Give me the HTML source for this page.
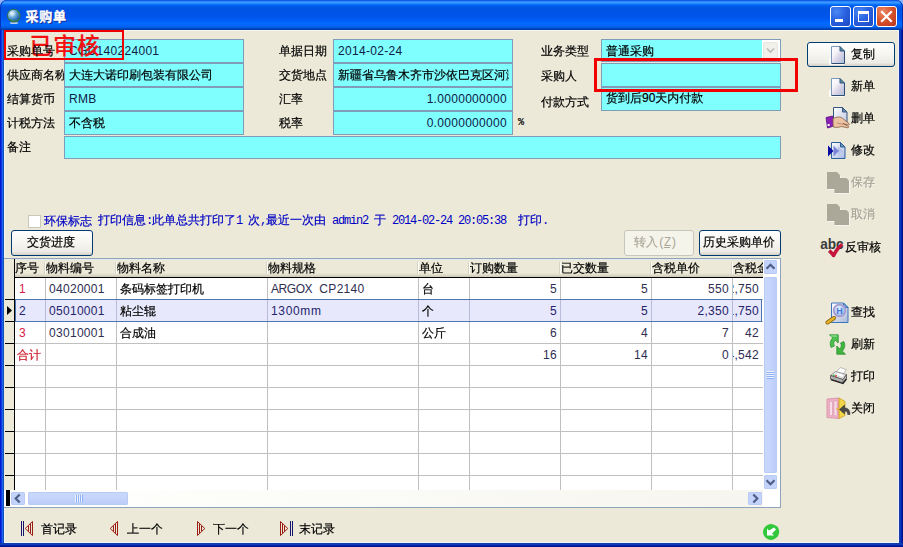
<!DOCTYPE html>
<html lang="zh-CN">
<head>
<meta charset="utf-8">
<title>采购单</title>
<style>
html,body{margin:0;padding:0}
body{width:903px;height:547px;overflow:hidden;position:relative;background:#ece9d8;
 font-family:"Liberation Sans","WenQuanYi Zen Hei",sans-serif;font-size:12px;line-height:12px;color:#000;-webkit-text-stroke:0.2px}
div,span{box-sizing:border-box}
.abs,.lbl,.fld,.btn,.sb,.tx{position:absolute}
/* window frame */
#title{position:absolute;left:0;top:0;width:903px;height:30px;
 background:linear-gradient(to bottom,#0046d6 0%,#1c74f6 3.500%,#3593ff 6%,#3a98ff 9%,#2088ff 12%,#0a72fa 15%,#0262ee 18%,#0057e5 24%,#0054e3 28%,#0055eb 56%,#005bf5 66%,#026afe 78%,#0064f2 88%,#0056dc 93%,#0044b8 96%,#0036a0 100%);
 border-radius:7px 7px 0 0;box-shadow:inset 1px 0 0 #0034c0,inset -1px 0 0 #0030b0}
#title .cap{-webkit-text-stroke:0.35px #fff;position:absolute;left:25.500px;top:9.500px;color:#fff;font-weight:bold;font-size:13px;line-height:14px;letter-spacing:.7px;
 font-family:"Liberation Sans","Noto Sans CJK SC",sans-serif;text-shadow:1px 1px 0 #0a1883}
#bl{left:0;top:30px;width:4px;height:517px;background:linear-gradient(to right,#0019d2 0px,#0019d2 1px,#0c3ce0 1px,#0c3ce0 2px,#1a64f0 2px,#1a64f0 3px,#1450b4 3px,#1450b4 4px)}
#br{left:899px;top:30px;width:4px;height:517px;background:linear-gradient(to right,#143ca8 0px,#143ca8 1px,#1038b8 1px,#1038b8 2px,#0020ae 2px,#0020ae 3px,#00148c 3px,#00148c 4px)}
#bb{left:0;top:543px;width:903px;height:4px;background:linear-gradient(to bottom,#143ca8 0px,#143ca8 1px,#1038b8 1px,#1038b8 2px,#0020ae 2px,#0020ae 3px,#00148c 3px,#00148c 4px)}
.lbl{white-space:nowrap;height:12px}
.fld{border:1px solid #7f9db9;background:#80ffff;height:24px;overflow:hidden;white-space:nowrap;
 color:#0c2048;padding:5px 4px 0 4px;line-height:13px;z-index:1;letter-spacing:.3px}
.fld{-webkit-text-stroke:0}
.fld.cn{letter-spacing:0;-webkit-text-stroke:0.2px}
.n{-webkit-text-stroke:0;letter-spacing:.3px}
.fld.cn{color:#000}
.fld.r{text-align:right;padding-right:5px;letter-spacing:.3px}
.btn{border:1px solid #003c74;border-radius:3px;height:25px;
 background:linear-gradient(to bottom,#ffffff 0%,#f6f5ef 50%,#ecebe5 86%,#d6d0c5 100%);
 text-align:center;line-height:23px;white-space:nowrap}
.btn.dis{border-color:#c9c7ba;background:#f5f4ea;color:#aca899}
.tx{white-space:nowrap}
.dis{color:#a7a394;text-shadow:1px 1px 0 rgba(255,255,255,.55)}
.sb{border-radius:2px;background:#c3d3fb;box-shadow:0 0 0 1px #b9cbf3 inset}
.sb.v{background:linear-gradient(to right,#cad9fd 0%,#c4d4fc 50%,#b9cbf7 100%)}
.sb.h{background:linear-gradient(to bottom,#cad9fd 0%,#c4d4fc 50%,#b9cbf7 100%)}
.tb{position:absolute;top:6px;width:21px;height:21px;border:1px solid #fff;border-radius:3px;
 background:radial-gradient(circle at 30% 25%,#4b8af5 0%,#2a62e0 45%,#1c48c0 100%)}
.tb.cl{background:radial-gradient(circle at 30% 25%,#ee8a68 0%,#d6502c 50%,#b8361a 100%)}
.a{font-family:"Liberation Mono",monospace;letter-spacing:-1.2px;-webkit-text-stroke:0}
</style>
</head>
<body>
<div id="corners" class="abs" style="left:0;top:0;width:903px;height:8px;background:#92b2fa"></div>
<div id="title"><span class="cap">采购单</span>
<svg class="abs" style="left:6px;top:7px" width="17" height="18" viewBox="0 0 17 18">
<defs><radialGradient id="gl" cx=".36" cy=".32" r=".8"><stop offset="0" stop-color="#f4fbff"/><stop offset=".2" stop-color="#b4d8ee"/><stop offset=".45" stop-color="#5a9ed2"/><stop offset=".75" stop-color="#2a68b0"/><stop offset="1" stop-color="#1c4a80"/></radialGradient></defs>
<ellipse cx="8" cy="16" rx="4.200" ry="1" fill="#c4d8f6" opacity=".95"/>
<circle cx="7.800" cy="8.700" r="6.400" fill="url(#gl)" stroke="#2f6a4e" stroke-width="1"/>
<path d="M1.800 10.500 c1.200 3 4 4.500 7.500 4.300 c2.500 -.3 4 -1.500 4.800 -3.300 c-1.500 1.300 -3.500 2.200 -6 2 c-2.500 -.2 -4.500 -1.200 -6.300 -3z" fill="#3f8a34" opacity=".9"/>
<path d="M9.500 2.500 c2.500 .8 4 2.800 4.500 5.500 c.2 1.200 0 2.200 -.3 3 c0 -3 -1.500 -6 -4.200 -8.500z" fill="#4a9440" opacity=".9"/>
<path d="M2 6 c.5 -2 2 -3.500 4 -4 c-1.500 1.200 -2.800 2.500 -4 4z" fill="#4a9440" opacity=".7"/>
</svg>
<div class="tb" style="left:830px"><div class="abs" style="left:4px;top:12px;width:8px;height:3px;background:#fff"></div></div>
<div class="tb" style="left:853px"><div class="abs" style="left:4px;top:4px;width:11px;height:11px;border:1px solid #fff;border-top:3px solid #fff"></div></div>
<div class="tb cl" style="left:876px"><svg width="19" height="19" style="position:absolute;left:0;top:0"><path d="M5 5 L14 14 M14 5 L5 14" stroke="#fff" stroke-width="2.200" stroke-linecap="square"/></svg></div>
</div>
<div id="bl" class="abs"></div><div id="br" class="abs"></div><div id="bb" class="abs"></div>

<div class="abs" style="left:4px;top:30px;width:1px;height:513px;background:#ecf4ff"></div><div class="abs" style="left:898px;top:30px;width:1px;height:513px;background:#e6f0ff"></div><div class="abs" style="left:4px;top:542px;width:895px;height:1px;background:#eef5ff"></div>
<div class="abs" style="left:4px;top:30px;width:895px;height:1px;background:#f8f7f0"></div>
<!-- FORM -->
<div id="form">
<div class="lbl" style="left:7px;top:45px;z-index:3">采购单号</div>
<div class="lbl" style="left:7px;top:69px">供应商名称</div>
<div class="lbl" style="left:7px;top:93px">结算货币</div>
<div class="lbl" style="left:7px;top:117px">计税方法</div>
<div class="lbl" style="left:7px;top:141px">备注</div>
<div class="fld" style="left:64px;top:39px;width:180px">CGD140224001</div>
<div class="fld cn" style="left:64px;top:63px;width:180px">大连大诺印刷包装有限公司</div>
<div class="fld" style="left:64px;top:87px;width:180px">RMB</div>
<div class="fld cn" style="left:64px;top:111px;width:180px">不含税</div>
<div class="fld" style="left:64px;top:136px;width:717px;height:23px"></div>

<div class="lbl" style="left:279px;top:45px">单据日期</div>
<div class="lbl" style="left:279px;top:69px">交货地点</div>
<div class="lbl" style="left:279px;top:93px">汇率</div>
<div class="lbl" style="left:279px;top:117px">税率</div>
<div class="fld" style="left:333px;top:39px;width:180px">2014-02-24</div>
<div class="fld cn" style="left:333px;top:63px;width:180px"><div style="width:171px;overflow:hidden">新疆省乌鲁木齐市沙依巴克区河滩北路</div></div>
<div class="fld r" style="left:333px;top:87px;width:180px">1.0000000000</div>
<div class="fld r" style="left:333px;top:111px;width:180px">0.0000000000</div>
<div class="lbl" style="left:518px;top:117px;font-family:'Liberation Mono','WenQuanYi Zen Hei Mono',monospace;font-size:10px">%</div>

<div class="lbl" style="left:541px;top:45px">业务类型</div>
<div class="lbl" style="left:541px;top:70px">采购人</div>
<div class="lbl" style="left:541px;top:96px">付款方式</div>
<div class="fld cn" style="left:601px;top:39px;width:180px;height:23px;padding:0;background:#fff">
 <div class="abs" style="left:0;top:0;width:160px;height:21px;background:#80ffff;padding:5px 0 0 4px;line-height:13px">普通采购</div>
 <div class="abs" style="left:161px;top:2px;width:15px;height:17px;background:#f1f0e9;border:1px solid #e6e5de;border-radius:2px">
 <svg width="13" height="15" style="position:absolute;left:0;top:0"><path d="M3 5.500 L6.500 9 L10 5.500" fill="none" stroke="#bdbcb6" stroke-width="1.700"/></svg></div>
</div>
<div class="fld" style="left:601px;top:63px;width:180px"></div>
<div class="fld cn" style="left:601px;top:87px;width:180px;padding-top:4px">货到后90天内付款</div>

<div class="abs" style="left:594px;top:58px;width:204px;height:34px;border:3px solid #f00000;z-index:2"></div>
<div class="abs" style="left:4px;top:30px;width:120px;height:30px;border:2px solid #f00000;z-index:2"></div>
<div class="abs" style="left:29.500px;top:34px;z-index:2;-webkit-text-stroke:0.2px;font-size:22.500px;line-height:26px;color:#f41010;font-family:'Liberation Sans','Noto Sans CJK SC',sans-serif;font-weight:500;white-space:nowrap;letter-spacing:1.300px">已审核</div>
</div>
<!-- SIDE -->
<div id="side">
<div class="btn" style="left:807px;top:42px;width:88px;height:25px"></div>
<svg class="abs" style="left:829px;top:45px" width="18" height="21" viewBox="0 0 18 21">
<defs><linearGradient id="g1" x1="0" y1="0" x2="1" y2="1"><stop offset="0" stop-color="#ffffff"/><stop offset=".35" stop-color="#f4f2f8"/><stop offset=".6" stop-color="#d9d3e6"/><stop offset="1" stop-color="#a9bcd8"/></linearGradient></defs>
<path d="M0 13 h2.500 v5.500 h12.500 v1.500 h-15z" fill="#fff" opacity=".85"/>
<path d="M2.500 1.500 h8.500 l4.500 4.500 v12.500 h-13z" fill="url(#g1)"/>
<path d="M2.500 18.500 v-17 h8.500" fill="none" stroke="#7b9abb" stroke-width="1"/>
<path d="M2.500 18.500 h13 v-12.500" fill="none" stroke="#2c4c74" stroke-width="1"/>
<path d="M11 1.500 v4.500 h4.500z" fill="#5a88a4" stroke="#2c5a78" stroke-width="1" stroke-linejoin="round"/>
</svg>
<div class="tx" style="left:851px;top:48px">复制</div>
<svg class="abs" style="left:829px;top:77px" width="18" height="21" viewBox="0 0 18 21">
<defs><linearGradient id="g2" x1="0" y1="0" x2="1" y2="1"><stop offset="0" stop-color="#ffffff"/><stop offset=".35" stop-color="#f4f2f8"/><stop offset=".6" stop-color="#d9d3e6"/><stop offset="1" stop-color="#a9bcd8"/></linearGradient></defs>
<path d="M0 13 h2.500 v5.500 h12.500 v1.500 h-15z" fill="#fff" opacity=".85"/>
<path d="M2.500 1.500 h8.500 l4.500 4.500 v12.500 h-13z" fill="url(#g2)"/>
<path d="M2.500 18.500 v-17 h8.500" fill="none" stroke="#7b9abb" stroke-width="1"/>
<path d="M2.500 18.500 h13 v-12.500" fill="none" stroke="#2c4c74" stroke-width="1"/>
<path d="M11 1.500 v4.500 h4.500z" fill="#5a88a4" stroke="#2c5a78" stroke-width="1" stroke-linejoin="round"/>
</svg>
<div class="tx" style="left:851px;top:80px">新单</div>

<svg class="abs" style="left:825px;top:106px" width="26" height="24" viewBox="0 0 26 24">
<defs><linearGradient id="g3" x1="0" y1="0" x2="1" y2="1"><stop offset="0" stop-color="#fff"/><stop offset="1" stop-color="#bcc6e2"/></linearGradient></defs>
<path d="M8.5 1.5 h9 l4.500 4.500 v12 h-13.500z" fill="url(#g3)" stroke="#35557e"/>
<path d="M17.500 1.500 v4.500 h4.500z" fill="#6a8db0" stroke="#35557e" stroke-linejoin="round"/>
<path d="M1 11.500 l6.500 -1.500 l1.500 10 l-6.500 2z" fill="#8a1fb4" stroke="#5a0f80" stroke-width=".8"/>
<rect x="2.600" y="18" width="2" height="2" fill="#fff"/>
<path d="M8 12.500 c3 -1.500 6 -2 8.500 -1 l7.500 6 c.8 .8 .3 1.800 -1 1.500 l-5 -1.500 l5.500 3 c.5 .8 -.3 1.500 -1.300 1.200 l-6 -1.200 c-3 1.200 -5.500 1 -8 .5z" fill="#ecc3a2" stroke="#8b5e45" stroke-width=".8" stroke-linejoin="round"/>
<path d="M12 17 l6 1.300" stroke="#a87660" stroke-width=".7" fill="none"/>
</svg>
<div class="tx" style="left:851px;top:112px">删单</div>

<svg class="abs" style="left:826px;top:140px" width="22" height="21" viewBox="0 0 22 21">
<defs><linearGradient id="g4" x1="0" y1="0" x2="1" y2="1"><stop offset="0" stop-color="#fff"/><stop offset="1" stop-color="#a9b9e4"/></linearGradient></defs>
<path d="M5.500 2.500 h9 l4.500 4.500 v11.500 h-13.500z" fill="url(#g4)" stroke="#2f5f9a"/>
<path d="M14.500 2.500 v4.500 h4.500z" fill="#6a8db0" stroke="#2f5f9a" stroke-linejoin="round"/>
<path d="M12 6 l5 5 l-5 5z" fill="#b8c2ea"/>
<path d="M7.500 5.500 l5.500 5.500 l-5.500 5.500z" fill="#7b86d6"/>
<path d="M2 5.500 l5.500 5.500 l-5.500 5.500z" fill="#0a0aa0"/>
</svg>
<div class="tx" style="left:851px;top:144px">修改</div>

<svg class="abs" style="left:826px;top:171px" width="25" height="24" viewBox="0 0 25 24">
<path d="M1 1 h10 l3 3 v14 h-13z M8.500 7 h12 l2.500 2.500 v12.500 h-14.500z" fill="#fff" opacity=".75" transform="translate(.8,.8)"/>
<path d="M1 1 h10 l3 3 v14 h-13z" fill="#aca899"/>
<path d="M8.500 7 h12 l2.500 2.500 v12.500 h-14.500z" fill="#aca899"/>
</svg>
<div class="tx dis" style="left:851px;top:176px">保存</div>
<svg class="abs" style="left:826px;top:203px" width="25" height="24" viewBox="0 0 25 24">
<path d="M1 1 h10 l3 3 v14 h-13z M8.500 7 h12 l2.500 2.500 v12.500 h-14.500z" fill="#fff" opacity=".75" transform="translate(.8,.8)"/>
<path d="M1 1 h10 l3 3 v14 h-13z" fill="#aca899"/>
<path d="M8.500 7 h12 l2.500 2.500 v12.500 h-14.500z" fill="#aca899"/>
</svg>
<div class="tx dis" style="left:851px;top:208px">取消</div>

<svg class="abs" style="left:819px;top:236px" width="28" height="24" viewBox="0 0 28 24">
<text x="1.200" y="13" font-family="Liberation Sans, sans-serif" font-weight="bold" font-size="14" fill="#3a3a3a" textLength="23.500" lengthAdjust="spacingAndGlyphs">abc</text>
<path d="M9.200 16 L11.400 13.600 L14.400 16.600 C16.500 12.500 19 9.800 22 7.600 L24.200 9.200 C20.500 12.500 17.800 16.500 15.600 20.900 L13.600 20.900 C12.500 19 11 17.500 9.200 16z" fill="#c8143c" stroke="#a01030" stroke-width=".4"/>
</svg>
<div class="tx" style="left:845px;top:241px">反审核</div>

<svg class="abs" style="left:825px;top:301px" width="25" height="24" viewBox="0 0 25 24">
<defs><linearGradient id="g5" x1="0" y1="0" x2="1" y2="1"><stop offset="0" stop-color="#fff"/><stop offset="1" stop-color="#aab8d8"/></linearGradient>
<radialGradient id="g6" cx=".4" cy=".35" r=".7"><stop offset="0" stop-color="#e8f2ff"/><stop offset="1" stop-color="#8db4ee"/></radialGradient></defs>
<path d="M6.500 2 h12 l4.500 4.500 v15 h-16.500z" fill="url(#g5)" stroke="#3c74c0"/>
<path d="M18.500 2 v4.500 h4.500z" fill="#7ba0d8" stroke="#3c74c0" stroke-linejoin="round"/>
<path d="M9 17 l-6.500 4.500" stroke="#8a6410" stroke-width="4" stroke-linecap="round"/>
<path d="M9 17 l-6.500 4.500" stroke="#e6b428" stroke-width="2.400" stroke-linecap="round"/>
<circle cx="14.500" cy="9.500" r="5.800" fill="url(#g6)" stroke="#a79ccc" stroke-width="1.800"/>
<text x="11.300" y="13" font-family="Liberation Sans, sans-serif" font-weight="bold" font-size="9" fill="#4a78d8">H</text>
</svg>
<div class="tx" style="left:851px;top:306px">查找</div>

<svg class="abs" style="left:827px;top:333px" width="21" height="23" viewBox="0 0 21 23">
<path d="M2.500 1.800 h8.700 v8.200 l-2.800 -2.800 c-1.800 1.500 -2.200 3.500 -1 5.800 l-3.200 1.500 c-1.800 -3.500 -1 -7 1.500 -9.500z" fill="#4cc04c" stroke="#2f8f36" stroke-width=".8" stroke-linejoin="round"/>
<path d="M18.500 21.200 h-8.700 v-8.200 l2.800 2.800 c1.800 -1.500 2.200 -3.500 1 -5.800 l3.200 -1.500 c1.800 3.500 1 7 -1.500 9.500z" fill="#3fb43f" stroke="#2f8f36" stroke-width=".8" stroke-linejoin="round"/>
<path d="M4 3 h6" stroke="#a8eaa0" stroke-width="1"/>
</svg>
<div class="tx" style="left:851px;top:338px">刷新</div>

<svg class="abs" style="left:829px;top:366px" width="19" height="19" viewBox="0 0 19 19">
<path d="M6.500 6.500 l4.800 -5 l6 2.200 l-4.300 5.800z" fill="#fff" stroke="#a4a4a4" stroke-width=".7"/>
<path d="M1.500 9.500 l5 -4 l11 3 l-3.500 5 z" fill="#ececec" stroke="#7c7c7c" stroke-width=".8" stroke-linejoin="round"/>
<path d="M8 6.500 l7.500 2.200 l-2 2.800 l-7.500 -2.400z" fill="#fff" stroke="#b0b0b0" stroke-width=".5"/>
<path d="M1.500 9.500 l12.500 4 l3.500 -5 v4 l-3.500 4.500 l-12.500 -4z" fill="#b2b2b2" stroke="#4c4c4c" stroke-width=".8" stroke-linejoin="round"/>
<path d="M14 13.500 v4" stroke="#5c5c5c" stroke-width=".8"/>
<path d="M1.800 13.600 l12.200 3.900 l3.500 -4.500" stroke="#222" stroke-width="1.300" fill="none"/>
<circle cx="4.800" cy="9.300" r=".9" fill="#30b030"/><circle cx="7" cy="10" r=".9" fill="#e03030"/>
</svg>
<div class="tx" style="left:851px;top:370px">打印</div>

<svg class="abs" style="left:826px;top:397px" width="25" height="23" viewBox="0 0 25 23">
<path d="M1 2 l12 -1 v20.500 l-12 -1z" fill="#eeb0c4" stroke="#d68aa4" stroke-width=".8"/>
<path d="M3.500 4.500 l3 -.3 v14.500 l-3 -.3z M8 4 l3 -.3 v15.300 l-3 -.300z" fill="#f8dce6" stroke="#d896ae" stroke-width=".6"/>
<path d="M13 1 l6 3.500 v14 l-6 3z" fill="#f2d64a" stroke="#c8a020" stroke-width=".8"/>
<circle cx="11.500" cy="12" r="1" fill="#e8b020"/>
<path d="M13.500 12.500 l5 -4.500 v3 c3.500 0 5.500 2 5.500 6.500 h-2.300 c0 -2.500 -1 -3.500 -3.200 -3.500 v3z" fill="#4a4a4a" stroke="#2a2a2a" stroke-width=".5" stroke-linejoin="round"/>
</svg>
<div class="tx" style="left:851px;top:402px">关闭</div>
</div>
<!-- MID -->
<div id="mid">
<div class="abs" style="left:28px;top:215px;width:13px;height:13px;background:#fff;border:1px solid #cac8bb"></div>
<div class="tx" style="left:44px;top:215px;color:#0000c4">环保标志</div>
<div class="tx" style="left:98px;top:215px;color:#0000c4;font-family:'Liberation Mono','WenQuanYi Zen Hei',monospace;white-space:pre;letter-spacing:0">打印信息<span class="a">:</span>此单总共打印了<span class="a">1 </span>次<span class="a">,</span>最近一次由<span class="a"> admin2 </span>于<span class="a"> 2014-02-24 20:05:38  </span>打印<span class="a">.</span></div>
<div class="btn" style="left:11px;top:230px;width:82px;height:26px;line-height:22px;text-align:left;padding-left:15px">交货进度</div>
<div class="btn dis" style="left:624px;top:230px;width:70px;height:26px;line-height:22px;text-align:left;padding-left:9px;text-shadow:none">转入<span class="a" style="font-size:12px">(<u>Z</u>)</span></div>
<div class="btn" style="left:699px;top:230px;width:82px;height:26px;line-height:22px;text-align:left;padding-left:3px">历史采购单价</div>
</div>
<!-- GRID -->
<div id="grid" class="abs" style="left:4px;top:258px;width:777px;height:250px;border:1px solid #8da4bc;border-left:none;background:#fff;overflow:hidden">
<div class="abs" style="left:0;top:0;width:759px;height:18px;background:linear-gradient(to bottom,#e4e9ee 0,#e4e9ee 1px,#ece9d8 1px,#ece9d8 14px,#dedbc9 16px,#c8c5b2 18px)"></div>
<div class="abs" style="left:0;top:0;width:10px;height:231px;background:#ece9d8"></div>
<div class="tx" style="left:11px;top:3px;width:30px;overflow:hidden">序号</div>
<div class="abs" style="left:40px;top:3px;width:1px;height:12px;background:#d8d4c4"></div>
<div class="abs" style="left:41px;top:3px;width:1px;height:12px;background:#fff"></div>
<div class="tx" style="left:42px;top:3px;width:70px;overflow:hidden">物料编号</div>
<div class="abs" style="left:111px;top:3px;width:1px;height:12px;background:#d8d4c4"></div>
<div class="abs" style="left:112px;top:3px;width:1px;height:12px;background:#fff"></div>
<div class="tx" style="left:113px;top:3px;width:150px;overflow:hidden">物料名称</div>
<div class="abs" style="left:262px;top:3px;width:1px;height:12px;background:#d8d4c4"></div>
<div class="abs" style="left:263px;top:3px;width:1px;height:12px;background:#fff"></div>
<div class="tx" style="left:264px;top:3px;width:150px;overflow:hidden">物料规格</div>
<div class="abs" style="left:413px;top:3px;width:1px;height:12px;background:#d8d4c4"></div>
<div class="abs" style="left:414px;top:3px;width:1px;height:12px;background:#fff"></div>
<div class="tx" style="left:415px;top:3px;width:50px;overflow:hidden">单位</div>
<div class="abs" style="left:464px;top:3px;width:1px;height:12px;background:#d8d4c4"></div>
<div class="abs" style="left:465px;top:3px;width:1px;height:12px;background:#fff"></div>
<div class="tx" style="left:466px;top:3px;width:90px;overflow:hidden">订购数量</div>
<div class="abs" style="left:555px;top:3px;width:1px;height:12px;background:#d8d4c4"></div>
<div class="abs" style="left:556px;top:3px;width:1px;height:12px;background:#fff"></div>
<div class="tx" style="left:557px;top:3px;width:90px;overflow:hidden">已交数量</div>
<div class="abs" style="left:646px;top:3px;width:1px;height:12px;background:#d8d4c4"></div>
<div class="abs" style="left:647px;top:3px;width:1px;height:12px;background:#fff"></div>
<div class="tx" style="left:648px;top:3px;width:80px;overflow:hidden">含税单价</div>
<div class="abs" style="left:727px;top:3px;width:1px;height:12px;background:#d8d4c4"></div>
<div class="abs" style="left:728px;top:3px;width:1px;height:12px;background:#fff"></div>
<div class="tx" style="left:729px;top:3px;width:30px;overflow:hidden">含税金额</div>
<div class="abs" style="left:41px;top:19px;width:1px;height:212px;background:#c0c0c0"></div>
<div class="abs" style="left:112px;top:19px;width:1px;height:212px;background:#c0c0c0"></div>
<div class="abs" style="left:263px;top:19px;width:1px;height:212px;background:#c0c0c0"></div>
<div class="abs" style="left:414px;top:19px;width:1px;height:212px;background:#c0c0c0"></div>
<div class="abs" style="left:465px;top:19px;width:1px;height:212px;background:#c0c0c0"></div>
<div class="abs" style="left:556px;top:19px;width:1px;height:212px;background:#c0c0c0"></div>
<div class="abs" style="left:647px;top:19px;width:1px;height:212px;background:#c0c0c0"></div>
<div class="abs" style="left:728px;top:19px;width:1px;height:212px;background:#c0c0c0"></div>
<div class="abs" style="left:11px;top:40px;width:748px;height:1px;background:#c0c0c0"></div>
<div class="abs" style="left:1px;top:40px;width:9px;height:1px;background:#000"></div>
<div class="abs" style="left:11px;top:62px;width:748px;height:1px;background:#c0c0c0"></div>
<div class="abs" style="left:1px;top:62px;width:9px;height:1px;background:#000"></div>
<div class="abs" style="left:11px;top:84px;width:748px;height:1px;background:#c0c0c0"></div>
<div class="abs" style="left:1px;top:84px;width:9px;height:1px;background:#000"></div>
<div class="abs" style="left:11px;top:106px;width:748px;height:1px;background:#c0c0c0"></div>
<div class="abs" style="left:1px;top:106px;width:9px;height:1px;background:#000"></div>
<div class="abs" style="left:11px;top:128px;width:748px;height:1px;background:#c0c0c0"></div>
<div class="abs" style="left:1px;top:128px;width:9px;height:1px;background:#000"></div>
<div class="abs" style="left:11px;top:150px;width:748px;height:1px;background:#c0c0c0"></div>
<div class="abs" style="left:1px;top:150px;width:9px;height:1px;background:#000"></div>
<div class="abs" style="left:11px;top:172px;width:748px;height:1px;background:#c0c0c0"></div>
<div class="abs" style="left:1px;top:172px;width:9px;height:1px;background:#000"></div>
<div class="abs" style="left:11px;top:194px;width:748px;height:1px;background:#c0c0c0"></div>
<div class="abs" style="left:1px;top:194px;width:9px;height:1px;background:#000"></div>
<div class="abs" style="left:11px;top:216px;width:748px;height:1px;background:#c0c0c0"></div>
<div class="abs" style="left:1px;top:216px;width:9px;height:1px;background:#000"></div>
<div class="abs" style="left:11px;top:40px;width:747px;height:23px;background:#e8e8fc;border:1px solid #4c74b0"></div>
<div class="abs" style="left:41px;top:41px;width:1px;height:21px;background:#b8bcd8"></div>
<div class="abs" style="left:112px;top:41px;width:1px;height:21px;background:#b8bcd8"></div>
<div class="abs" style="left:263px;top:41px;width:1px;height:21px;background:#b8bcd8"></div>
<div class="abs" style="left:414px;top:41px;width:1px;height:21px;background:#b8bcd8"></div>
<div class="abs" style="left:465px;top:41px;width:1px;height:21px;background:#b8bcd8"></div>
<div class="abs" style="left:556px;top:41px;width:1px;height:21px;background:#b8bcd8"></div>
<div class="abs" style="left:647px;top:41px;width:1px;height:21px;background:#b8bcd8"></div>
<div class="abs" style="left:728px;top:41px;width:1px;height:21px;background:#b8bcd8"></div>
<div class="abs" style="left:10px;top:0;width:1px;height:231px;background:#000"></div>
<div class="abs" style="left:10px;top:18px;width:749px;height:1px;background:#000"></div>
<svg class="abs" style="left:3px;top:47px" width="6" height="10"><path d="M0 0 L5 4.500 L0 9z" fill="#000"/></svg>
<div class="tx n" style="left:15px;top:24px;color:#d81846;height:14px;line-height:13px">1</div>
<div class="tx n" style="left:45px;top:24px;color:#2e2e52;height:14px;line-height:13px">04020001</div>
<div class="tx" style="left:116px;top:24px;color:#000;height:14px;line-height:13px">条码标签打印机</div>
<div class="tx n" style="left:267px;top:24px;color:#2e2e52;height:14px;line-height:13px;white-space:pre"><span style="letter-spacing:-.45px">ARGOX</span>  CP2140</div>
<div class="tx" style="left:418px;top:24px;color:#000;height:14px;line-height:13px">台</div>
<div class="tx n" style="left:466px;top:24px;width:87px;text-align:right;color:#2e2e52;overflow:hidden;direction:rtl;height:14px;line-height:13px;letter-spacing:.3px"><span style="direction:ltr;unicode-bidi:bidi-override">5</span></div>
<div class="tx n" style="left:557px;top:24px;width:87px;text-align:right;color:#2e2e52;overflow:hidden;direction:rtl;height:14px;line-height:13px;letter-spacing:.3px"><span style="direction:ltr;unicode-bidi:bidi-override">5</span></div>
<div class="tx n" style="left:648px;top:24px;width:77px;text-align:right;color:#2e2e52;overflow:hidden;direction:rtl;height:14px;line-height:13px;letter-spacing:.3px"><span style="direction:ltr;unicode-bidi:bidi-override">550</span></div>
<div class="tx n" style="left:729px;top:24px;width:26px;text-align:right;color:#2e2e52;overflow:hidden;direction:rtl;height:14px;line-height:13px;letter-spacing:.3px"><span style="direction:ltr;unicode-bidi:bidi-override">2,750</span></div>
<div class="tx n" style="left:15px;top:46px;color:#24246a;height:14px;line-height:13px">2</div>
<div class="tx n" style="left:45px;top:46px;color:#24246a;height:14px;line-height:13px">05010001</div>
<div class="tx" style="left:116px;top:46px;color:#000;height:14px;line-height:13px">粘尘辊</div>
<div class="tx n" style="left:267px;top:46px;color:#24246a;height:14px;line-height:13px;letter-spacing:.65px">1300mm</div>
<div class="tx" style="left:418px;top:46px;color:#000;height:14px;line-height:13px">个</div>
<div class="tx n" style="left:466px;top:46px;width:87px;text-align:right;color:#24246a;overflow:hidden;direction:rtl;height:14px;line-height:13px;letter-spacing:.3px"><span style="direction:ltr;unicode-bidi:bidi-override">5</span></div>
<div class="tx n" style="left:557px;top:46px;width:87px;text-align:right;color:#24246a;overflow:hidden;direction:rtl;height:14px;line-height:13px;letter-spacing:.3px"><span style="direction:ltr;unicode-bidi:bidi-override">5</span></div>
<div class="tx n" style="left:648px;top:46px;width:77px;text-align:right;color:#24246a;overflow:hidden;direction:rtl;height:14px;line-height:13px;letter-spacing:.3px"><span style="direction:ltr;unicode-bidi:bidi-override">2,350</span></div>
<div class="tx n" style="left:729px;top:46px;width:26px;text-align:right;color:#24246a;overflow:hidden;direction:rtl;height:14px;line-height:13px;letter-spacing:.3px"><span style="direction:ltr;unicode-bidi:bidi-override">11,750</span></div>
<div class="tx n" style="left:15px;top:68px;color:#d81846;height:14px;line-height:13px">3</div>
<div class="tx n" style="left:45px;top:68px;color:#2e2e52;height:14px;line-height:13px">03010001</div>
<div class="tx" style="left:116px;top:68px;color:#000;height:14px;line-height:13px">合成油</div>
<div class="tx" style="left:418px;top:68px;color:#000;height:14px;line-height:13px">公斤</div>
<div class="tx n" style="left:466px;top:68px;width:87px;text-align:right;color:#2e2e52;overflow:hidden;direction:rtl;height:14px;line-height:13px;letter-spacing:.3px"><span style="direction:ltr;unicode-bidi:bidi-override">6</span></div>
<div class="tx n" style="left:557px;top:68px;width:87px;text-align:right;color:#2e2e52;overflow:hidden;direction:rtl;height:14px;line-height:13px;letter-spacing:.3px"><span style="direction:ltr;unicode-bidi:bidi-override">4</span></div>
<div class="tx n" style="left:648px;top:68px;width:77px;text-align:right;color:#2e2e52;overflow:hidden;direction:rtl;height:14px;line-height:13px;letter-spacing:.3px"><span style="direction:ltr;unicode-bidi:bidi-override">7</span></div>
<div class="tx n" style="left:729px;top:68px;width:26px;text-align:right;color:#2e2e52;overflow:hidden;direction:rtl;height:14px;line-height:13px;letter-spacing:.3px"><span style="direction:ltr;unicode-bidi:bidi-override">42</span></div>
<div class="tx" style="left:13px;top:90px;color:#cc1a2a;height:14px;line-height:13px">合计</div>
<div class="tx n" style="left:466px;top:90px;width:87px;text-align:right;color:#2e2e52;overflow:hidden;direction:rtl;height:14px;line-height:13px;letter-spacing:.3px"><span style="direction:ltr;unicode-bidi:bidi-override">16</span></div>
<div class="tx n" style="left:557px;top:90px;width:87px;text-align:right;color:#2e2e52;overflow:hidden;direction:rtl;height:14px;line-height:13px;letter-spacing:.3px"><span style="direction:ltr;unicode-bidi:bidi-override">14</span></div>
<div class="tx n" style="left:648px;top:90px;width:77px;text-align:right;color:#2e2e52;overflow:hidden;direction:rtl;height:14px;line-height:13px;letter-spacing:.3px"><span style="direction:ltr;unicode-bidi:bidi-override">0</span></div>
<div class="tx n" style="left:729px;top:90px;width:26px;text-align:right;color:#2e2e52;overflow:hidden;direction:rtl;height:14px;line-height:13px;letter-spacing:.3px"><span style="direction:ltr;unicode-bidi:bidi-override">14,542</span></div>
<div class="abs" style="left:759px;top:0;width:17px;height:232px;background:#fefefc"></div>
<div class="sb" style="left:760px;top:1px;width:13px;height:14px"><svg width="13" height="14" style="position:absolute;left:0;top:0"><path d="M2.500 8.700 L6.500 4.700 L10.500 8.700" fill="none" stroke="#4d6185" stroke-width="2.200"/></svg></div>
<div class="sb v" style="left:760px;top:18px;width:13px;height:196px"><div class="abs" style="left:3px;top:94px;width:7px;height:8px;background:repeating-linear-gradient(to bottom,#eef4fe 0,#eef4fe 1px,#8cb0f8 1px,#8cb0f8 2px)"></div></div>
<div class="sb" style="left:760px;top:216px;width:13px;height:14px"><svg width="13" height="14" style="position:absolute;left:0;top:0"><path d="M2.500 5.300 L6.500 9.300 L10.500 5.300" fill="none" stroke="#4d6185" stroke-width="2.200"/></svg></div>
<div class="abs" style="left:0;top:231px;width:776px;height:17px;background:linear-gradient(to right,#ffffff 0%,#fdfdfa 25%,#f6f5ef 100%)"></div>
<div class="abs" style="left:759px;top:231px;width:17px;height:17px;background:#fff"></div>
<div class="abs" style="left:2px;top:231px;width:4px;height:16px;background:#000"></div>
<div class="sb" style="left:7px;top:233px;width:14px;height:13px"><svg width="14" height="13" style="position:absolute;left:0;top:0"><path d="M8.700 2.500 L4.700 6.500 L8.700 10.500" fill="none" stroke="#4d6185" stroke-width="2.200"/></svg></div>
<div class="sb h" style="left:24px;top:233px;width:100px;height:13px"><div class="abs" style="left:47px;top:3px;width:8px;height:7px;background:repeating-linear-gradient(to right,#eef4fe 0,#eef4fe 1px,#8cb0f8 1px,#8cb0f8 2px)"></div></div>
<div class="sb" style="left:744px;top:233px;width:14px;height:13px"><svg width="14" height="13" style="position:absolute;left:0;top:0"><path d="M5.300 2.500 L9.300 6.500 L5.300 10.500" fill="none" stroke="#4d6185" stroke-width="2.200"/></svg></div>
</div>
<!-- NAV -->
<div id="nav">
<svg class="abs" style="left:20px;top:520px" width="15" height="17" viewBox="0 0 15 17">
<path d="M1.500 1 v15 M3.500 1 v15" stroke="#141470" stroke-width="1"/>
<path d="M12.5 1.500 V15.500 L5.2 8.500 Z" fill="none" stroke="#9a1c10" stroke-width="1" stroke-linejoin="miter"/><path d="M10.5 4 V13 M8.5 6 V11" stroke="#9a1c10" stroke-width="1"/>
</svg>
<div class="tx" style="left:41px;top:523px">首记录</div>
<svg class="abs" style="left:108px;top:520px" width="11" height="17" viewBox="0 0 11 17">
<path d="M9.5 1.500 V15.500 L2.2 8.500 Z" fill="none" stroke="#9a1c10" stroke-width="1" stroke-linejoin="miter"/><path d="M7.5 4 V13 M5.5 6 V11" stroke="#9a1c10" stroke-width="1"/>
</svg>
<div class="tx" style="left:127px;top:523px">上一个</div>
<svg class="abs" style="left:196px;top:520px" width="11" height="17" viewBox="0 0 11 17">
<path d="M1.5 1.500 V15.500 L8.8 8.500 Z" fill="none" stroke="#9a1c10" stroke-width="1" stroke-linejoin="miter"/><path d="M3.5 4 V13 M5.5 6 V11" stroke="#9a1c10" stroke-width="1"/>
</svg>
<div class="tx" style="left:213px;top:523px">下一个</div>
<svg class="abs" style="left:279px;top:520px" width="15" height="17" viewBox="0 0 15 17">
<path d="M1.5 1.500 V15.500 L8.8 8.500 Z" fill="none" stroke="#9a1c10" stroke-width="1" stroke-linejoin="miter"/><path d="M3.5 4 V13 M5.5 6 V11" stroke="#9a1c10" stroke-width="1"/>
<path d="M11.500 1 v15 M13.500 1 v15" stroke="#141470" stroke-width="1"/>
</svg>
<div class="tx" style="left:299px;top:523px">末记录</div>
<svg class="abs" style="left:762px;top:523px" width="18" height="18" viewBox="0 0 18 18">
<path d="M9 1 c2 0 3 1 4.500 1.500 c1.500 .5 2.500 1.500 3 3 c.5 1.500 1 3 .5 4.500 c-.5 2 -1 3.500 -2.500 4.500 c-1.500 1.500 -3.500 2.500 -5.500 2.500 c-2 0 -4 -1 -5.500 -2.500 c-1.500 -1.500 -2.500 -3.500 -2.500 -5.500 c0 -2 1 -4 2.500 -5.500 c1.500 -1.500 3.500 -2.500 5.500 -2.500z" fill="#32c83c"/>
<path d="M12 4.500 l2 2 l-4 4 l2 2 h-7 v-7 l2 2z" fill="#fff"/>
</svg>
</div>
</body>
</html>
